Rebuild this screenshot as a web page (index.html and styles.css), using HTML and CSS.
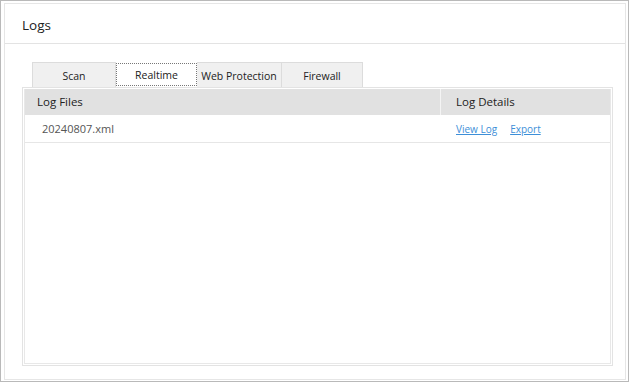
FILE: index.html
```html
<!DOCTYPE html>
<html>
<head>
    <title>Logs</title>
    <link rel="stylesheet" href="styles.css">
</head>
<body>
    <div class="window">
        <div class="panel">
            <div class="title">Logs</div>
            <div class="content">
                <div class="tabs">
                    <div class="tab tab-scan">Scan</div>
                    <div class="tab tab-realtime active">Realtime</div>
                    <div class="tab tab-web">Web Protection</div>
                    <div class="tab tab-firewall">Firewall</div>
                </div>
                <div class="table-box">
                    <div class="table">
                        <div class="row head">
                            <div class="col files">Log Files</div>
                            <div class="col details">Log Details</div>
                        </div>
                        <div class="row item">
                            <div class="col files">20240807.xml</div>
                            <div class="col details links">
                                <a href="#">View Log</a>
                                <a href="#">Export</a>
                            </div>
                        </div>
                    </div>
                </div>
            </div>
        </div>
    </div>
</body>
</html>
```

FILE: styles.css
```css
* {
    box-sizing: border-box;
}
body {
    margin: 0;
    background: #fff;
    font-family: "Open Sans", "Noto Sans", sans-serif;
    color: #333;
}
.window {
    width: 629px;
    height: 382px;
    border: 1px solid #b9b9b9;
    padding: 2px 2px 1px 3px;
}
.panel {
    height: 100%;
    border: 1px solid #e6e6e6;
    display: flex;
    flex-direction: column;
}
.title {
    height: 41px;
    border-bottom: 1px solid #e3e3e3;
    padding: 12px 0 0 17px;
    font-size: 13.5px;
    color: #222;
}
.content {
    flex: 1;
    padding: 18px 12px 13px 17px;
    display: flex;
    flex-direction: column;
}
.tabs {
    display: flex;
    margin-left: 10px;
    height: 25px;
}
.tab {
    height: 25px;
    background: #f0f0f0;
    border: 1px solid #dcdcdc;
    border-bottom: none;
    border-left: none;
    font-size: 10.5px;
    color: #222;
    text-align: center;
    padding-top: 6px;
}
.tab-scan {
    width: 84px;
    border-left: 1px solid #dcdcdc;
}
.tab-realtime { width: 81px; }
.tab-web { width: 85px; }
.tab-firewall { width: 81px; }
.tab.active {
    background: #fff;
    border: 1px dotted #777;
    height: 23px;
    margin-top: 1px;
    padding-top: 4px;
}
.table-box {
    width: 591px;
    height: 279px;
    border: 1px solid #e3e3e3;
    padding: 1px;
}
.table {
    height: 100%;
    border: 1px solid #e8e8e8;
    border-top: none;
}
.row {
    display: flex;
}
.head {
    height: 26px;
    background: #e1e1e1;
    font-size: 11.5px;
    color: #222;
}
.head .col {
    padding-top: 5px;
}
.head .files {
    width: 416px;
    padding-left: 12px;
    border-right: 1px solid #f4f4f4;
}
.head .details {
    padding-left: 15px;
}
.item {
    height: 28px;
    border-bottom: 1px solid #e6e6e6;
    font-size: 11px;
}
.item .col {
    padding-top: 6px;
}
.item .files {
    width: 416px;
    padding-left: 17px;
    color: #555;
}
.links {
    display: flex;
    gap: 13px;
    padding-left: 15px;
    font-size: 10px;
}
.item .links {
    padding-top: 7px;
}
.links a {
    color: #3d8fd8;
}
```
